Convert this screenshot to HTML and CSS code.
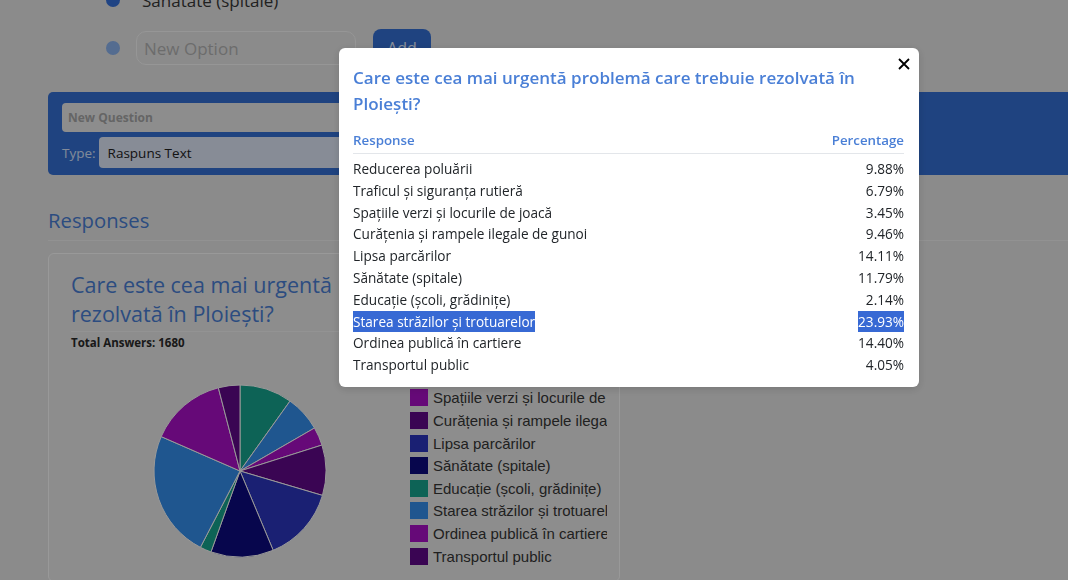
FILE: index.html
```html
<!DOCTYPE html>
<html lang="ro">
<head>
    <meta charset="UTF-8">
    <meta name="viewport" content="width=device-width, initial-scale=1.0">
    <title>Survey Builder - Responses</title>
    <link rel="stylesheet" href="styles.css">
</head>
<body>
    <main class="page">
        <!-- Options of the current question -->
        <ul class="options">
            <li class="option">
                <span class="dot"></span>
                <span class="option-text">Sănătate (spitale)</span>
            </li>
            <li class="option">
                <span class="dot dot-new"></span>
                <input type="text" class="option-input" placeholder="New Option">
                <button type="button" class="btn-add">Add</button>
            </li>
        </ul>

        <!-- New question bar -->
        <section class="question-bar">
            <input type="text" class="question-input" placeholder="New Question">
            <div class="type-row">
                <label class="type-label">Type:</label>
                <select class="type-select">
                    <option>Raspuns Text</option>
                </select>
            </div>
        </section>

        <h2 class="section-title">Responses</h2>

        <article class="card">
            <h3 class="card-title">Care este cea mai urgentă problemă care trebuie rezolvată în Ploiești?</h3>
            <p class="total">Total Answers: 1680</p>
            <div class="chart">
                <svg class="pie" width="339" height="240" viewBox="0 0 339 240">
                    <g stroke="#fff" stroke-width="1">
                        <path class="c-teal" d="M169 130 L169 44 A86 86 0 0 1 219.03 60.05 Z"/>
                        <path class="c-blue" d="M169 130 L219.03 60.05 A86 86 0 0 1 243.48 87.02 Z"/>
                        <path class="c-purple" d="M169 130 L243.48 87.02 A86 86 0 0 1 250.98 104.04 Z"/>
                        <path class="c-plum" d="M169 130 L250.98 104.04 A86 86 0 0 1 251.46 154.41 Z"/>
                        <path class="c-navy" d="M169 130 L251.46 154.41 A86 86 0 0 1 202.2 209.33 Z"/>
                        <path class="c-night" d="M169 130 L202.2 209.33 A86 86 0 0 1 139.97 210.94 Z"/>
                        <path class="c-teal" d="M169 130 L139.97 210.94 A86 86 0 0 1 129.38 206.33 Z"/>
                        <path class="c-blue" d="M169 130 L129.38 206.33 A86 86 0 0 1 90.19 95.6 Z"/>
                        <path class="c-purple" d="M169 130 L90.19 95.6 A86 86 0 0 1 147.35 46.77 Z"/>
                        <path class="c-plum" d="M169 130 L147.35 46.77 A86 86 0 0 1 169 44 Z"/>
                    </g>
                </svg>
                <ul class="legend">
                    <li><span class="swatch bg-teal"></span>Reducerea poluării</li>
                    <li><span class="swatch bg-blue"></span>Traficul și siguranța rutieră</li>
                    <li><span class="swatch bg-purple"></span>Spațiile verzi și locurile de joacă</li>
                    <li><span class="swatch bg-plum"></span>Curățenia și rampele ilegale de gunoi</li>
                    <li><span class="swatch bg-navy"></span>Lipsa parcărilor</li>
                    <li><span class="swatch bg-night"></span>Sănătate (spitale)</li>
                    <li><span class="swatch bg-teal"></span>Educație (școli, grădinițe)</li>
                    <li><span class="swatch bg-blue"></span>Starea străzilor și trotuarelor</li>
                    <li><span class="swatch bg-purple"></span>Ordinea publică în cartiere</li>
                    <li><span class="swatch bg-plum"></span>Transportul public</li>
                </ul>
            </div>
        </article>
    </main>

    <!-- Results modal -->
    <div class="backdrop"></div>
    <div class="modal">
        <div class="modal-header">
            <h5 class="modal-title">Care este cea mai urgentă problemă care trebuie rezolvată în Ploiești?</h5>
            <button type="button" class="modal-close" aria-label="Close">
                <svg width="12" height="12" viewBox="0 0 12 12">
                    <path d="M1 1 L11 11 M11 1 L1 11" stroke="#000" stroke-width="1.8" fill="none"/>
                </svg>
            </button>
        </div>
        <table class="results">
            <thead>
                <tr><th>Response</th><th class="pct">Percentage</th></tr>
            </thead>
            <tbody>
                <tr><td>Reducerea poluării</td><td class="pct">9.88%</td></tr>
                <tr><td>Traficul și siguranța rutieră</td><td class="pct">6.79%</td></tr>
                <tr><td>Spațiile verzi și locurile de joacă</td><td class="pct">3.45%</td></tr>
                <tr><td>Curățenia și rampele ilegale de gunoi</td><td class="pct">9.46%</td></tr>
                <tr><td>Lipsa parcărilor</td><td class="pct">14.11%</td></tr>
                <tr><td>Sănătate (spitale)</td><td class="pct">11.79%</td></tr>
                <tr><td>Educație (școli, grădinițe)</td><td class="pct">2.14%</td></tr>
                <tr><td><span class="hl">Starea străzilor și trotuarelor</span></td><td class="pct"><span class="hl">23.93%</span></td></tr>
                <tr><td>Ordinea publică în cartiere</td><td class="pct">14.40%</td></tr>
                <tr><td>Transportul public</td><td class="pct">4.05%</td></tr>
            </tbody>
        </table>
    </div>
</body>
</html>
```

FILE: styles.css
```css
/* Global */
* {
    box-sizing: border-box;
}

body {
    margin: 0;
    height: 580px;
    overflow: hidden;
    background: #e8e8e8;
    font-family: 'Open Sans', 'Noto Sans', sans-serif;
    color: #383838;
}

.page {
    padding-left: 48px;
    margin-top: -17px;
}

/* Option list */
.options {
    list-style: none;
    margin: 0;
    padding: 0 0 0 58px;
}

.option {
    display: flex;
    align-items: center;
    gap: 16px;
    min-height: 34px;
    margin-bottom: 12px;
}

.option:last-child {
    margin-bottom: 0;
}

.dot {
    width: 14px;
    height: 14px;
    border-radius: 50%;
    background: #3672dc;
    flex-shrink: 0;
}

.dot-new {
    background: #8cb4f0;
}

.option-text {
    padding-left: 6px;
    font-size: 17px;
}

.option-input {
    width: 220px;
    height: 34px;
    padding: 0 7px;
    border: 1px solid #fafafa;
    border-radius: 10px;
    background: transparent;
    font-family: inherit;
    font-size: 17px;
    outline: none;
}

.option-input::placeholder {
    color: #b5b5b5;
}

.btn-add {
    width: 58px;
    height: 38px;
    margin-left: 1px;
    border: none;
    border-radius: 8px;
    background: #3470d5;
    color: #e6eeff;
    font-family: inherit;
    font-size: 16px;
}

/* New question bar */
.question-bar {
    margin-top: 25px;
    padding: 11px 14px 7px;
    background: #3470d5;
    border-radius: 5px 0 0 5px;
}

.question-input {
    display: block;
    width: 640px;
    height: 29px;
    padding: 0 6px;
    border: none;
    border-radius: 4px;
    background: #ececec;
    font-family: inherit;
    font-size: 12px;
    font-weight: 700;
    outline: none;
}

.question-input::placeholder {
    color: #a8a8a8;
}

.type-row {
    display: flex;
    align-items: center;
    gap: 3px;
    margin-top: 5px;
}

.type-label {
    color: #d8e6ff;
    font-size: 13.5px;
}

.type-select {
    width: 600px;
    height: 31px;
    padding: 0 9px;
    border: none;
    border-radius: 4px;
    background: #e2eafa;
    color: #222;
    font-family: inherit;
    font-size: 13.5px;
    appearance: none;
}

/* Responses */
.section-title {
    margin: 33px 0 0;
    padding-bottom: 8px;
    border-bottom: 1px solid #f4f4f4;
    color: #4a7fd6;
    font-size: 20.3px;
    font-weight: 500;
    line-height: 1.2;
}

.card {
    width: 572px;
    margin-top: 12px;
    padding: 15.5px 12px 0 22px;
    border: 1px solid #fff;
    border-radius: 6px;
    background: #ebebeb;
}

.card-title {
    margin: 0;
    padding-bottom: 3px;
    border-bottom: 1px solid #f6f6f6;
    color: #4a7fd6;
    font-size: 21.5px;
    font-weight: 500;
    line-height: 29px;
}

.total {
    margin: 3.6px 0 0;
    font-size: 11.5px;
    font-weight: 700;
    line-height: 16px;
    color: #2a2a2a;
}

/* Chart */
.chart {
    display: flex;
    margin-top: -10px;
}

.pie {
    flex-shrink: 0;
    display: block;
}

.legend {
    flex: 1;
    min-width: 0;
    margin: 0;
    padding: 0;
    list-style: none;
    overflow: hidden;
    white-space: nowrap;
    font-family: 'Liberation Sans', Arial, sans-serif;
    font-size: 15px;
    color: #363636;
}

.legend li {
    display: flex;
    align-items: center;
    gap: 5px;
    height: 22.6px;
}

.swatch {
    width: 18px;
    height: 17px;
    flex-shrink: 0;
}

.c-teal { fill: #17a58f; }
.c-blue { fill: #3590ee; }
.c-purple { fill: #aa10c8; }
.c-plum { fill: #62098a; }
.c-navy { fill: #2c36c0; }
.c-night { fill: #0c0a80; }

.bg-teal { background: #17a58f; }
.bg-blue { background: #3590ee; }
.bg-purple { background: #aa10c8; }
.bg-plum { background: #62098a; }
.bg-navy { background: #2c36c0; }
.bg-night { background: #0c0a80; }

/* Modal */
.backdrop {
    position: fixed;
    inset: 0;
    background: rgba(0, 0, 0, 0.4);
}

.modal {
    position: fixed;
    top: 48px;
    left: 339px;
    width: 580px;
    padding: 16.5px 15px 11.5px 14px;
    background: #fff;
    border-radius: 6px;
    box-shadow: 0 2px 8px rgba(0, 0, 0, 0.15);
}

.modal-header {
    display: flex;
    justify-content: space-between;
    align-items: flex-start;
    gap: 10px;
}

.modal-title {
    margin: 0;
    color: #4a7fd6;
    font-size: 17px;
    font-weight: 600;
    line-height: 26px;
}

.modal-close {
    display: flex;
    align-items: center;
    justify-content: center;
    width: 20px;
    height: 20px;
    margin: -10.5px -10px 0 0;
    padding: 0;
    border: none;
    background: none;
    flex-shrink: 0;
}

.results {
    width: 100%;
    margin-top: 13.3px;
    border-collapse: collapse;
}

.results th {
    padding: 0 0 3.5px;
    color: #4a7fd6;
    font-size: 13.3px;
    font-weight: 600;
    line-height: 20px;
    text-align: left;
}

.results thead tr {
    border-bottom: 1px solid #e3e6ea;
}

.results td {
    padding: 0;
    color: #212529;
    font-size: 13.6px;
    line-height: 21.8px;
}

.results tbody tr:first-child td {
    padding-top: 3.7px;
}

.results .pct {
    text-align: right;
}

.hl {
    display: inline-block;
    background: #3769d4;
    color: #fff;
}
```
